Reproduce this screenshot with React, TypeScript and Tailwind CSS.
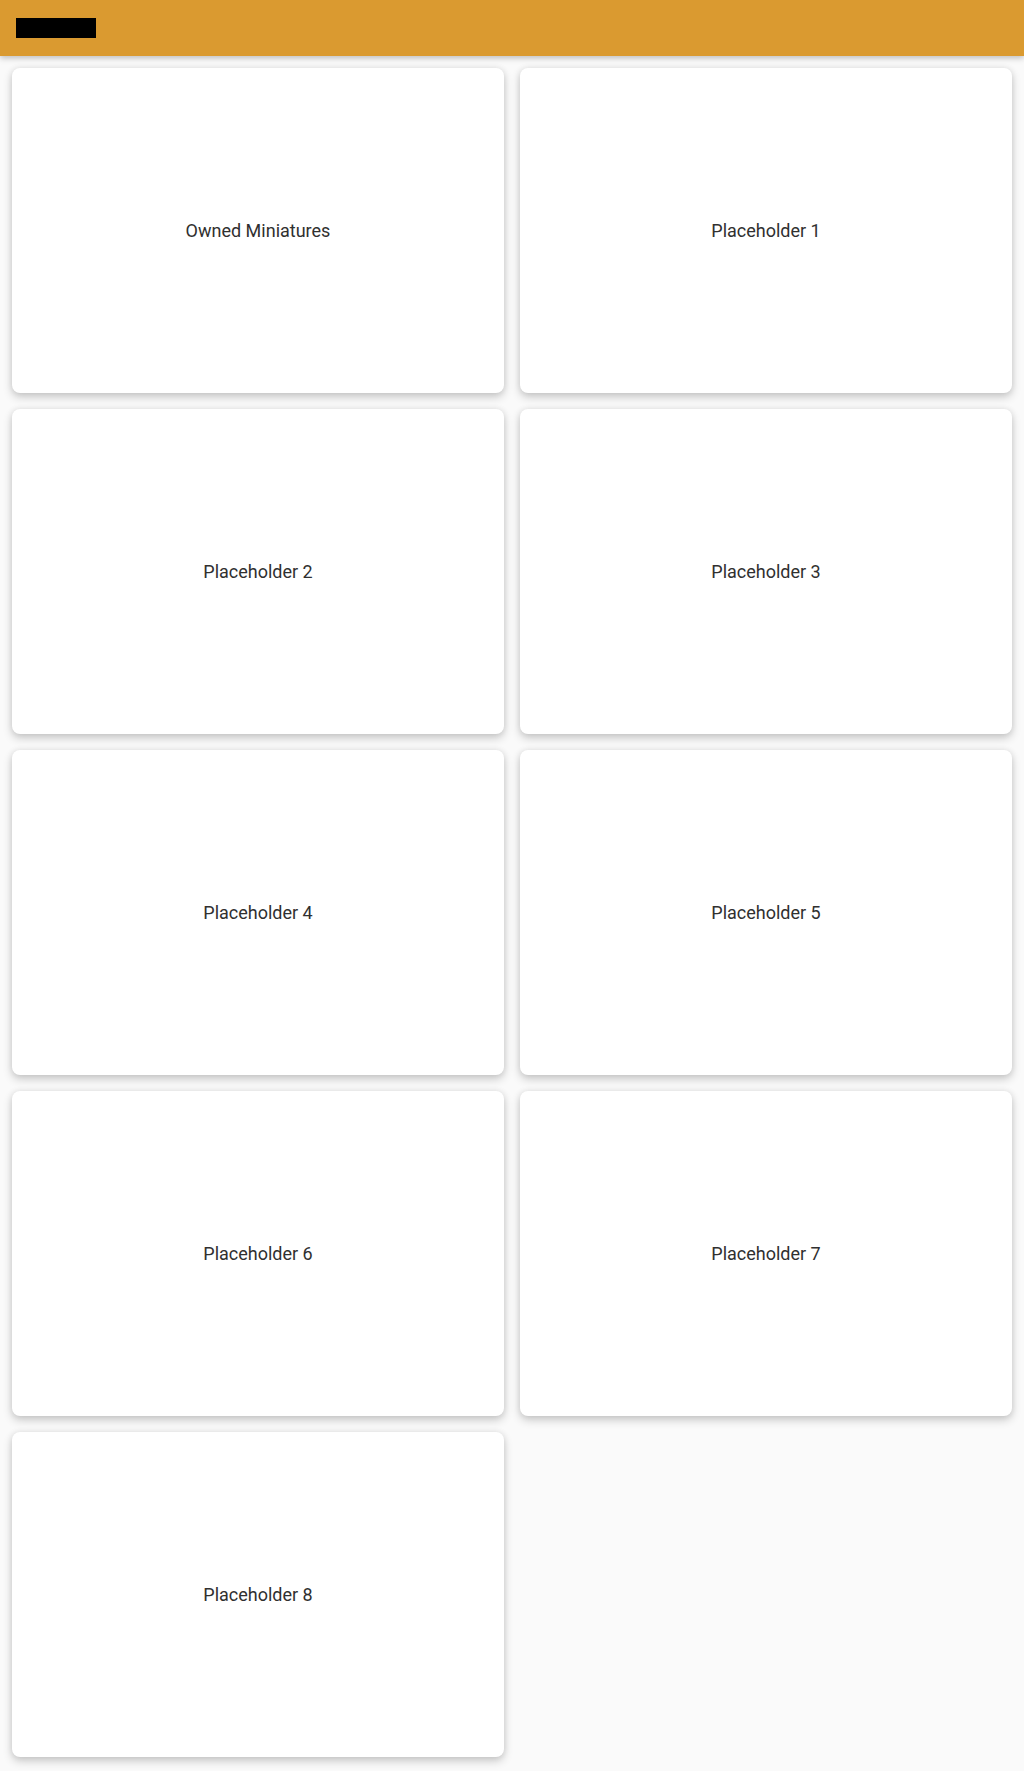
const tiles = [
  'Owned Miniatures',
  'Placeholder 1',
  'Placeholder 2',
  'Placeholder 3',
  'Placeholder 4',
  'Placeholder 5',
  'Placeholder 6',
  'Placeholder 7',
  'Placeholder 8',
];

export default function App() {
  return (
    <div className="min-h-[1771px] bg-[#fafafa] font-['Roboto',sans-serif]">
      <header className="relative z-10 flex h-14 items-center bg-[#da9a30] px-4 shadow-[0_2px_6px_rgba(0,0,0,0.25)]">
        <div className="h-5 w-20 bg-black" />
      </header>

      <main className="grid grid-cols-2 gap-4 p-3">
        {tiles.map((title) => (
          <div
            key={title}
            className="flex h-[325px] items-center justify-center rounded-lg bg-white shadow-[0_4px_10px_rgba(0,0,0,0.2),0_0_6px_rgba(0,0,0,0.08)]"
          >
            <span className="text-lg text-[#303030]">{title}</span>
          </div>
        ))}
      </main>
    </div>
  );
}
